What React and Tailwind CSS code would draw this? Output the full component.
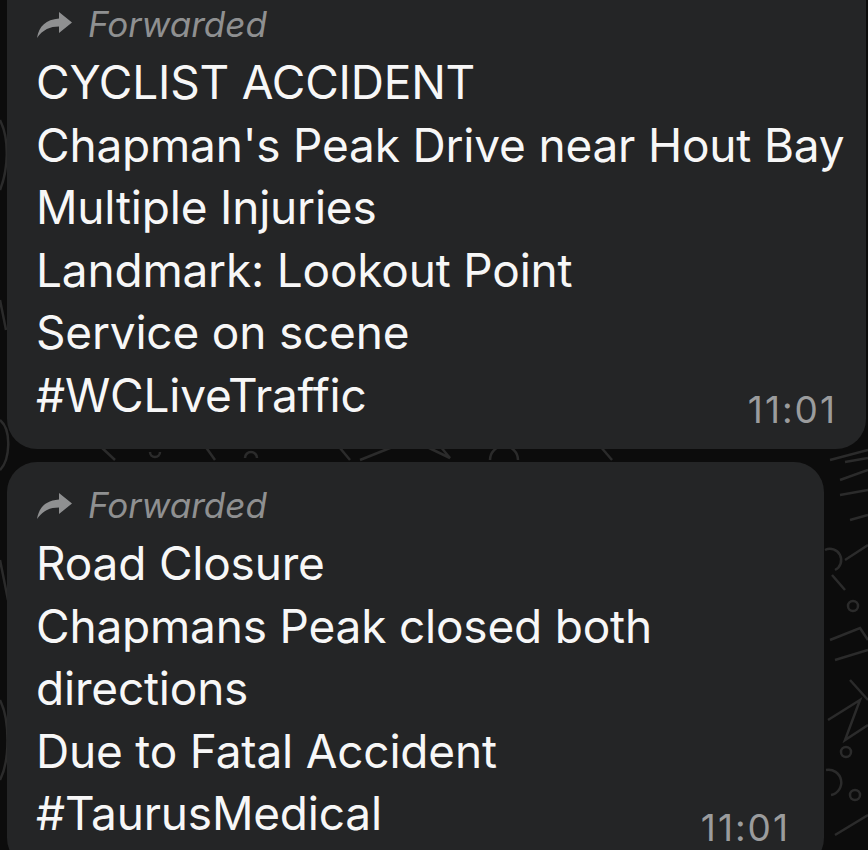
const Forwarded = () => (
  <div className="flex items-center h-[54px] text-[35px] italic text-[#8f9091]">
    <svg width="36" height="26" viewBox="0 0 36 26" className="mr-[16px] mt-[2px]" fill="#8f9091">
      <path d="M23 0 L36 10.5 L23 21 L23 14.5 C14 14.5 7 17.5 1 26 C3 14 10 7.5 23 6.5 Z" />
    </svg>
    <span>Forwarded</span>
  </div>
)

const Bubble = ({ lines, last, time, className }) => (
  <div className={`bg-[#242526] rounded-[30px] pl-[29px] ${className}`}>
    <Forwarded />
    <div className="text-[46px] leading-[62.5px] text-[#f7f7f7] tracking-[-0.2px] whitespace-nowrap">
      {lines.map((l) => (
        <div key={l}>{l}</div>
      ))}
      <div className="flex items-baseline">
        <span>{last}</span>
        <span className="ml-auto text-[37px] text-[#9b9c9d] translate-y-[11px] tracking-[2px]">{time}</span>
      </div>
    </div>
  </div>
)

const Doodles = () => (
  <svg className="absolute inset-0" width="868" height="850" fill="none" stroke="#2b2b2b" strokeWidth="2.5">
    <path d="M0 120 C10 140 8 170 0 190" />
    <path d="M0 300 L6 330" />
    <path d="M0 420 C12 430 10 460 0 470" />
    <path d="M0 560 L8 600" />
    <path d="M0 700 C10 720 10 760 0 780" />
    <path d="M205 446 L215 460 M245 458 a6 6 0 1 1 12 0" />
    <path d="M340 448 L350 460 M360 460 L395 446" />
    <path d="M425 446 L450 458 L440 446" />
    <path d="M490 460 a14 14 0 0 1 28 0" />
    <path d="M600 446 L612 460" />
    <path d="M100 446 L115 460 M150 452 a5 5 0 1 0 10 0" />
    <path d="M830 460 L868 450 M845 462 L868 458 M840 480 L868 470" />
    <path d="M840 495 L868 490 M850 520 L868 515 M845 560 L868 545" />
    <path d="M832 575 L845 590 M825 550 a10 10 0 0 1 10 20" />
    <circle cx="853" cy="606" r="5" />
    <path d="M830 640 L860 628 L868 640 M835 660 L868 650 M850 680 L868 700" />
    <path d="M828 720 L860 700 L845 740 L868 725" />
    <circle cx="846" cy="752" r="5" />
    <circle cx="855" cy="795" r="5" />
    <path d="M826 770 a10 10 0 0 1 5 25" />
    <path d="M835 835 L868 815" />
  </svg>
)

export default function App() {
  return (
    <div className="relative w-[868px] h-[850px] overflow-hidden bg-[#0c0c0c] font-['Inter','Roboto',sans-serif]">
      <Doodles />
      <div className="relative flex flex-col gap-[13px] pl-[7px] -mt-[3px]">
        <Bubble
          className="w-[859px] pb-[19px] pr-[29px] rounded-t-none"
          lines={[
            'CYCLIST ACCIDENT',
            "Chapman's Peak Drive near Hout Bay",
            'Multiple Injuries',
            'Landmark: Lookout Point',
            'Service on scene',
          ]}
          last="#WCLiveTraffic"
          time="11:01"
        />
        <Bubble
          className="w-[817px] pt-[16px] pb-[19px] pr-[34px]"
          lines={[
            'Road Closure',
            'Chapmans Peak closed both',
            'directions',
            'Due to Fatal Accident',
          ]}
          last="#TaurusMedical"
          time="11:01"
        />
      </div>
    </div>
  )
}
